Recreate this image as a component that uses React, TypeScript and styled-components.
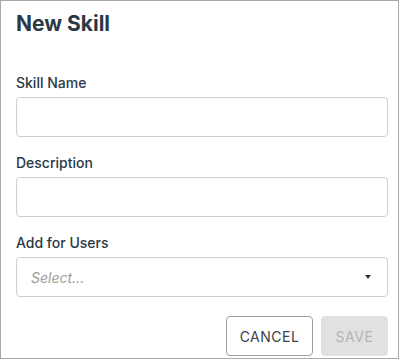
import React from "react";
import styled, { createGlobalStyle } from "styled-components";

const GlobalStyle = createGlobalStyle`
  body {
    margin: 0;
    background: #ffffff;
    font-family: "Inter", "Liberation Sans", sans-serif;
  }
`;

const Frame = styled.div`
  box-sizing: border-box;
  width: 399px;
  height: 359px;
  border: 1px solid #a8a8a8;
  padding: 0 10px 0 15px;
  display: flex;
  flex-direction: column;
  background: #fff;
`;

const Title = styled.h2`
  margin: 9px 0 0;
  font-size: 21px;
  line-height: 28px;
  font-weight: 700;
  color: #2b3945;
`;

const Form = styled.div`
  display: flex;
  flex-direction: column;
  gap: 16px;
  margin-top: 35px;
`;

const Field = styled.div`
  display: flex;
  flex-direction: column;
  gap: 4px;
`;

const Label = styled.label`
  font-size: 14px;
  line-height: 20px;
  font-weight: 500;
  color: #2b3945;
`;

const Input = styled.input`
  box-sizing: border-box;
  width: 100%;
  height: 40px;
  border: 1px solid #cfcfcf;
  border-radius: 4px;
  padding: 0 14px;
  font: inherit;
  font-size: 14px;
  outline: none;
`;

const SelectBox = styled.div`
  box-sizing: border-box;
  height: 40px;
  border: 1px solid #cfcfcf;
  border-radius: 4px;
  padding: 0 14px;
  display: flex;
  align-items: center;
  justify-content: space-between;
`;

const Placeholder = styled.span`
  font-size: 14px;
  font-style: italic;
  color: #9a9a9a;
`;

const Caret = styled.span`
  width: 0;
  height: 0;
  border-left: 3.5px solid transparent;
  border-right: 3.5px solid transparent;
  border-top: 4px solid #2b3945;
  margin-right: 2px;
`;

const Actions = styled.div`
  display: flex;
  justify-content: flex-end;
  gap: 8px;
  margin-top: 19px;
`;

const Button = styled.button<{ $disabled?: boolean }>`
  box-sizing: border-box;
  height: 40px;
  width: ${(p) => (p.$disabled ? "67px" : "87px")};
  padding: 0;
  border-radius: 4px;
  border: 1px solid ${(p) => (p.$disabled ? "#e1e1e1" : "#9e9e9e")};
  background: ${(p) => (p.$disabled ? "#e1e1e1" : "#ffffff")};
  color: ${(p) => (p.$disabled ? "#b4b4b4" : "#3a3f45")};
  font-family: "Inter", "Liberation Sans", sans-serif;
  font-size: 14px;
  letter-spacing: 0.5px;
  cursor: ${(p) => (p.$disabled ? "default" : "pointer")};
`;

export default function App() {
  return (
    <>
      <GlobalStyle />
      <Frame>
        <Title>New Skill</Title>
        <Form>
          <Field>
            <Label>Skill Name</Label>
            <Input />
          </Field>
          <Field>
            <Label>Description</Label>
            <Input />
          </Field>
          <Field>
            <Label>Add for Users</Label>
            <SelectBox>
              <Placeholder>Select...</Placeholder>
              <Caret />
            </SelectBox>
          </Field>
        </Form>
        <Actions>
          <Button>CANCEL</Button>
          <Button $disabled disabled>
            SAVE
          </Button>
        </Actions>
      </Frame>
    </>
  );
}
